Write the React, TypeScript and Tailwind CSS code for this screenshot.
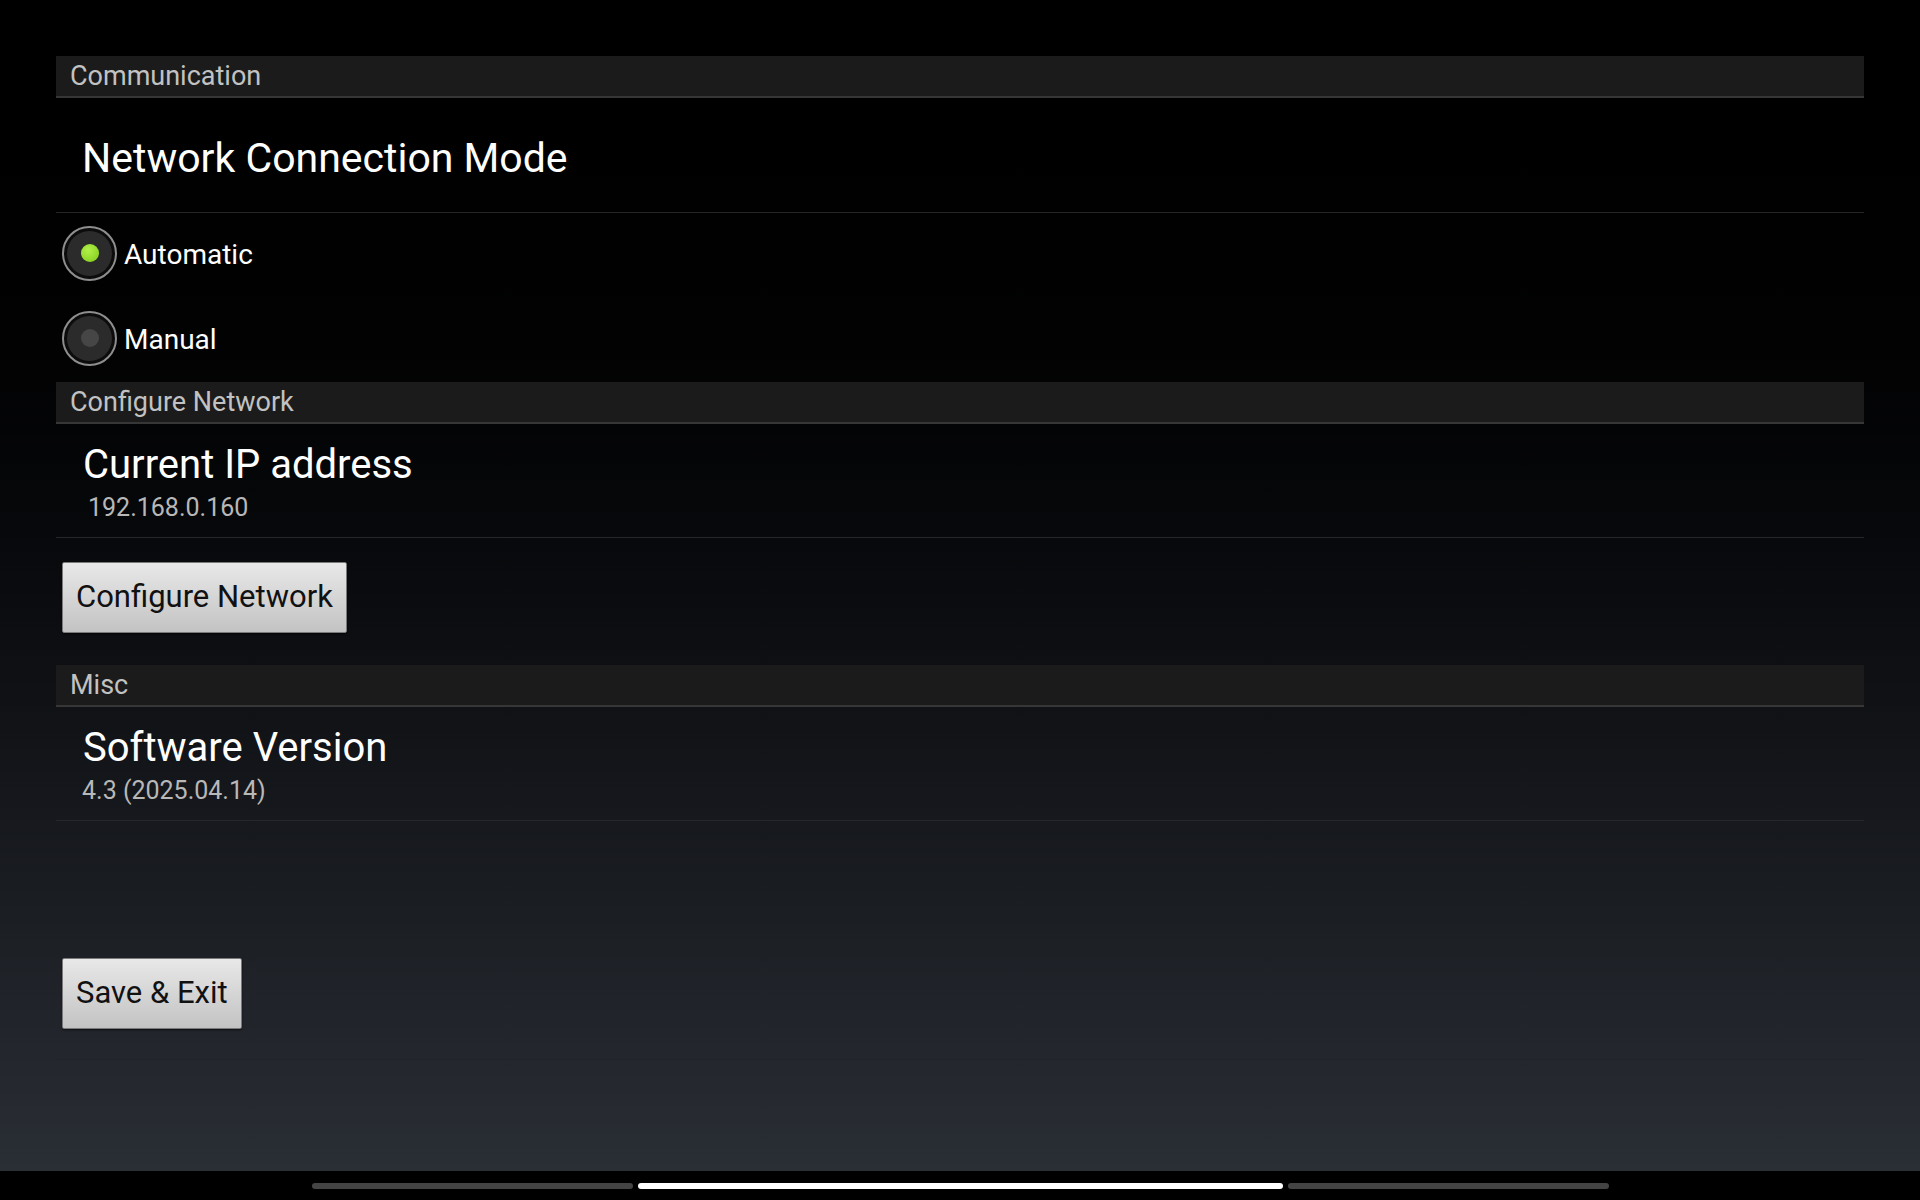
import type { ReactNode } from 'react'

const font = { fontFamily: 'Roboto, "Noto Sans", sans-serif' }

function SectionHeader({ children }: { children: ReactNode }) {
  return (
    <div className="flex h-[42px] items-center border-b-[2px] border-[#363636] bg-[#1b1b1b] pl-[14px] text-[27px] text-[#c2c2c2]">
      {children}
    </div>
  )
}

function InfoRow({ title, value, valueIndent }: { title: string; value: string; valueIndent: string }) {
  return (
    <div className="flex flex-col gap-[5px] border-b border-[#25272a] pt-[17px] pb-[15px]">
      <div className="pl-[27px] text-[40px] leading-[48px] text-white">{title}</div>
      <div className={`${valueIndent} text-[25px] leading-[28px] text-[#b8b8b8]`}>{value}</div>
    </div>
  )
}

function Radio({ label, checked }: { label: string; checked: boolean }) {
  return (
    <div className="flex h-[70px] items-center gap-[7px] pl-[6px]">
      <div className="flex h-[55px] w-[55px] items-center justify-center rounded-full border-[2px] border-[#8e8e8e] bg-[#0c0c0c] p-[3px]">
        <div className="flex h-full w-full items-center justify-center rounded-full bg-[#2b2b2b]">
          {checked ? (
            <div className="h-[18px] w-[18px] rounded-full bg-[radial-gradient(circle_at_40%_35%,#b2f04a,#7fc918)]" />
          ) : (
            <div className="h-[18px] w-[18px] rounded-full bg-[#464646]" />
          )}
        </div>
      </div>
      <span className="pt-[3px] text-[28px] text-white">{label}</span>
    </div>
  )
}

function GrayButton({ children }: { children: ReactNode }) {
  return (
    <button className="flex h-[71px] items-center rounded-[2px] border border-[#7a7a7a] bg-linear-to-b from-[#e8e8e8] to-[#c3c3c3] px-[13px] text-[31px] text-[#111] shadow-[0_1px_2px_rgba(0,0,0,0.6)]">
      {children}
    </button>
  )
}

export default function App() {
  return (
    <div className="flex h-[1200px] w-full flex-col bg-black" style={font}>
      <div className="flex flex-1 flex-col bg-linear-to-b from-[#000000] to-[#2a2e35] px-[56px] pt-[56px]">
        <SectionHeader>Communication</SectionHeader>
        <div className="flex h-[115px] items-center border-b border-[#262626] pt-[8px] pl-[26px] text-[41px] text-white">
          Network Connection Mode
        </div>
        <div className="flex flex-col gap-[15px] pt-[5px] pb-[9px]">
          <Radio label="Automatic" checked />
          <Radio label="Manual" checked={false} />
        </div>

        <SectionHeader>Configure Network</SectionHeader>
        <InfoRow title="Current IP address" value="192.168.0.160" valueIndent="pl-[32px]" />
        <div className="pt-[24px] pl-[6px]">
          <GrayButton>Configure Network</GrayButton>
        </div>

        <div className="mt-[32px]">
          <SectionHeader>Misc</SectionHeader>
        </div>
        <InfoRow title="Software Version" value="4.3 (2025.04.14)" valueIndent="pl-[26px]" />
        <div className="border-b border-[#1f2226] pt-[137px] pb-[30px] pl-[6px]">
          <GrayButton>Save &amp; Exit</GrayButton>
        </div>
      </div>
      <div className="flex h-[29px] items-center justify-center gap-[5px] bg-black">
        <div className="h-[6px] w-[321px] rounded-full bg-[#444]" />
        <div className="h-[6px] w-[645px] rounded-full bg-white" />
        <div className="h-[6px] w-[321px] rounded-full bg-[#444]" />
      </div>
    </div>
  )
}
